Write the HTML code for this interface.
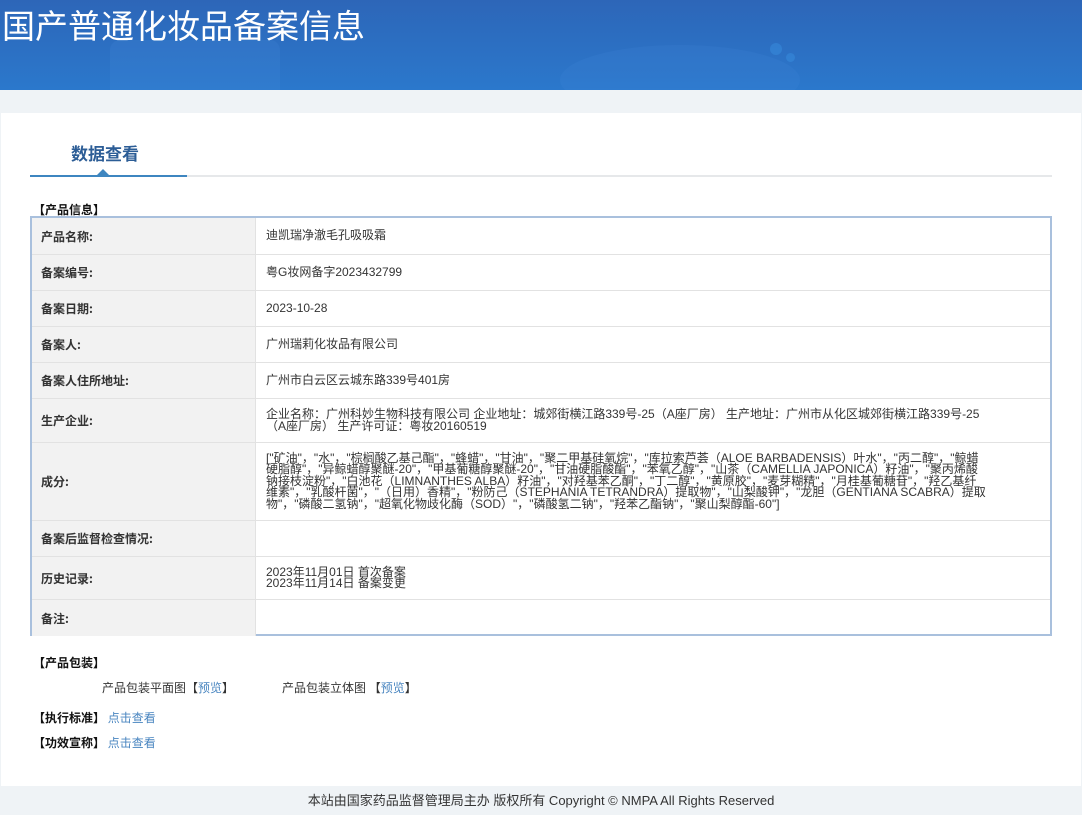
<!DOCTYPE html>
<html><head><meta charset="utf-8">
<style>
*{margin:0;padding:0;box-sizing:border-box}
body{width:1082px;height:815px;background:#eff3f6;font-family:"Liberation Sans","Noto Sans CJK SC",sans-serif;position:relative;overflow:hidden;color:#333}
.hdr{position:absolute;left:0;top:0;width:1082px;height:90px;background:linear-gradient(180deg,#2d66b8 0%,#2b78cc 100%);overflow:hidden}
.hdr h1{position:absolute;left:2px;top:3px;font-size:33px;font-weight:normal;color:#fff;font-family:"Noto Sans CJK SC",sans-serif;line-height:42px}
.blob{position:absolute;border-radius:50%;background:rgba(80,150,230,.12)}
.panel{position:absolute;left:1px;top:113px;width:1080px;height:673px;background:#fff}
.tab{position:absolute;left:71px;top:140px;font-size:17px;font-weight:bold;color:#2c5d96;font-family:"Noto Sans CJK SC",sans-serif}
.tabline{position:absolute;left:30px;top:175px;width:1022px;height:2px;background:#e6e8ea}
.tabact{position:absolute;left:30px;top:175px;width:157px;height:2px;background:#3e86c0}
.tri{position:absolute;left:97px;top:169px;width:0;height:0;border-left:6px solid transparent;border-right:6px solid transparent;border-bottom:6px solid #3e86c0}
.sec{position:absolute;font-size:12px;font-weight:bold;color:#111;font-family:"Noto Sans CJK SC",sans-serif}
.tbl{position:absolute;left:30px;top:216px;width:1022px;height:420px;border:2px solid #a9c0dd;background:#fff}
.row{position:absolute;left:0;width:1018px;border-bottom:1px solid #e2e2e2}
.lab{position:absolute;left:0;top:0;bottom:0;width:224px;background:#f2f2f2;border-right:1px solid #e2e2e2;font-size:12px;font-weight:bold;color:#333;padding-left:9px;display:flex;align-items:center;font-family:"Noto Sans CJK SC",sans-serif}
.val{position:absolute;left:234px;top:0;bottom:0;right:0;font-size:12px;color:#333;display:flex;align-items:center;line-height:11.5px;white-space:nowrap;font-family:"Liberation Sans","Noto Sans CJK SC",sans-serif}
.txt{font-size:12px;color:#333;position:absolute;font-family:"Noto Sans CJK SC",sans-serif}
a{color:#4a86c0;text-decoration:none}
.foot{position:absolute;left:0;top:790px;width:1082px;text-align:center;font-size:13px;color:#333;font-family:"Liberation Sans","Noto Sans CJK SC",sans-serif}
</style></head><body>
<div class="hdr">
<div class="blob" style="left:110px;top:40px;width:170px;height:80px;background:rgba(70,140,220,.2);border-radius:10px"></div>
<div class="blob" style="left:560px;top:45px;width:240px;height:70px"></div>
<div class="blob" style="left:770px;top:43px;width:12px;height:12px;background:rgba(60,150,230,.4)"></div>
<div class="blob" style="left:786px;top:53px;width:9px;height:9px;background:rgba(60,150,230,.4)"></div>
<h1>国产普通化妆品备案信息</h1>
</div>
<div class="panel"></div>
<div class="tab">数据查看</div>
<div class="tabline"></div><div class="tabact"></div><div class="tri"></div>
<div class="sec" style="left:33px;top:201px">【产品信息】</div>
<div class="tbl">
<div class="row" style="top:0;height:37px"><div class="lab">产品名称:</div><div class="val">迪凯瑞净澈毛孔吸吸霜</div></div>
<div class="row" style="top:37px;height:36px"><div class="lab">备案编号:</div><div class="val">粤G妆网备字2023432799</div></div>
<div class="row" style="top:73px;height:36px"><div class="lab">备案日期:</div><div class="val">2023-10-28</div></div>
<div class="row" style="top:109px;height:36px"><div class="lab">备案人:</div><div class="val">广州瑞莉化妆品有限公司</div></div>
<div class="row" style="top:145px;height:36px"><div class="lab">备案人住所地址:</div><div class="val">广州市白云区云城东路339号401房</div></div>
<div class="row" style="top:181px;height:44px"><div class="lab">生产企业:</div><div class="val"><div>企业名称：广州科妙生物科技有限公司 企业地址：城郊街横江路339号-25（A座厂房） 生产地址：广州市从化区城郊街横江路339号-25<br>（A座厂房） 生产许可证：粤妆20160519</div></div></div>
<div class="row" style="top:225px;height:78px"><div class="lab">成分:</div><div class="val"><div>["矿油"，"水"，"棕榈酸乙基己酯"，"蜂蜡"，"甘油"，"聚二甲基硅氧烷"，"库拉索芦荟（ALOE BARBADENSIS）叶水"，"丙二醇"，"鲸蜡<br>硬脂醇"，"异鲸蜡醇聚醚-20"，"甲基葡糖醇聚醚-20"，"甘油硬脂酸酯"，"苯氧乙醇"，"山茶（CAMELLIA JAPONICA）籽油"，"聚丙烯酸<br>钠接枝淀粉"，"白池花（LIMNANTHES ALBA）籽油"，"对羟基苯乙酮"，"丁二醇"，"黄原胶"，"麦芽糊精"，"月桂基葡糖苷"，"羟乙基纤<br>维素"，"乳酸杆菌"，"（日用）香精"，"粉防己（STEPHANIA TETRANDRA）提取物"，"山梨酸钾"，"龙胆（GENTIANA SCABRA）提取<br>物"，"磷酸二氢钠"，"超氧化物歧化酶（SOD）"，"磷酸氢二钠"，"羟苯乙酯钠"，"聚山梨醇酯-60"]</div></div></div>
<div class="row" style="top:303px;height:36px"><div class="lab">备案后监督检查情况:</div><div class="val"></div></div>
<div class="row" style="top:339px;height:43px"><div class="lab">历史记录:</div><div class="val"><div>2023年11月01日 首次备案<br>2023年11月14日 备案变更</div></div></div>
<div class="row" style="top:382px;height:36px;border-bottom:none"><div class="lab">备注:</div><div class="val"></div></div>
</div>
<div class="sec" style="left:33px;top:654px">【产品包装】</div>
<div class="txt" style="left:102px;top:679px">产品包装平面图【<a>预览</a>】</div>
<div class="txt" style="left:282px;top:679px">产品包装立体图 【<a>预览</a>】</div>
<div class="sec" style="left:33px;top:709px">【执行标准】 <a style="font-weight:normal">点击查看</a></div>
<div class="sec" style="left:33px;top:734px">【功效宣称】 <a style="font-weight:normal">点击查看</a></div>
<div class="foot">本站由国家药品监督管理局主办 版权所有 Copyright © NMPA All Rights Reserved</div>
</body></html>
